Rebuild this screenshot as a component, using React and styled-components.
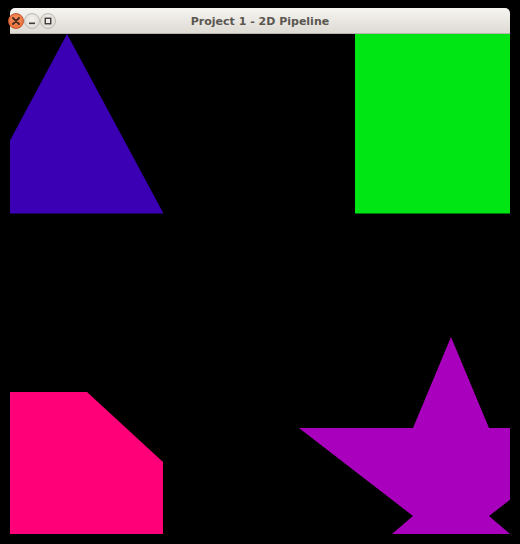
import React from "react";
import styled, { createGlobalStyle } from "styled-components";

const GlobalStyle = createGlobalStyle`
  html, body {
    margin: 0;
    padding: 0;
    background: #000;
  }
`;

const Screen = styled.div`
  width: 520px;
  height: 544px;
  background: #000;
  padding: 8px 10px 10px 10px;
  box-sizing: border-box;
  display: flex;
  flex-direction: column;
`;

const TitleBar = styled.div`
  position: relative;
  height: 26px;
  border-radius: 5px 5px 0 0;
  background: linear-gradient(#f6f5f1, #dedad4);
  border-bottom: 1px solid #b9b5ae;
  box-sizing: border-box;
  display: flex;
  align-items: center;
  justify-content: center;
`;

const Title = styled.span`
  font-family: "DejaVu Sans", sans-serif;
  font-weight: bold;
  font-size: 11px;
  color: #5a5750;
  margin-top: 1px;
`;

const Controls = styled.div`
  position: absolute;
  left: -2px;
  top: 5px;
  display: flex;
  gap: 0;
`;

const WinButton = styled.div`
  width: 16px;
  height: 16px;
  border-radius: 50%;
  box-sizing: border-box;
  border: 1px solid ${(p) => (p.close ? "#c2552d" : "#bdb9b2")};
  background: ${(p) =>
    p.close
      ? "radial-gradient(circle at 50% 40%, #f79466, #e9672e)"
      : "radial-gradient(circle at 50% 40%, #f4f2ee, #d9d5ce)"};
  display: flex;
  align-items: center;
  justify-content: center;
`;

const Canvas = styled.div`
  width: 500px;
  height: 500px;
  background: #000;
  overflow: hidden;
`;

const App = () => (
  <>
    <GlobalStyle />
    <Screen>
      <TitleBar>
        <Controls>
          <WinButton close>
            <svg width="8" height="8" viewBox="0 0 8 8">
              <path d="M1 1 L7 7 M7 1 L1 7" stroke="#4a2a1c" strokeWidth="1.8" strokeLinecap="round" />
            </svg>
          </WinButton>
          <WinButton>
            <svg width="8" height="8" viewBox="0 0 8 8">
              <rect x="1" y="5.5" width="6" height="1.6" fill="#3c3b37" />
            </svg>
          </WinButton>
          <WinButton>
            <svg width="8" height="8" viewBox="0 0 8 8">
              <rect x="1.25" y="1.25" width="5.5" height="5.5" fill="none" stroke="#3c3b37" strokeWidth="1.4" />
            </svg>
          </WinButton>
        </Controls>
        <Title>Project 1 - 2D Pipeline</Title>
      </TitleBar>
      <Canvas>
        <svg width="500" height="500" viewBox="0 0 500 500">
          <polygon points="57,0 153.5,179.5 -39,179.5" fill="#3b00b4" />
          <rect x="345" y="0" width="155" height="179.5" fill="#00e614" />
          <polygon points="0,358 77,358 153,428 153,500 0,500" fill="#ff0078" />
          <polygon
            points="441,303 479,394 593,394 479,482 520,517 441,511 362,517 403,482 289,394 403,394"
            fill="#a900bd"
          />
        </svg>
      </Canvas>
    </Screen>
  </>
);

export default App;
